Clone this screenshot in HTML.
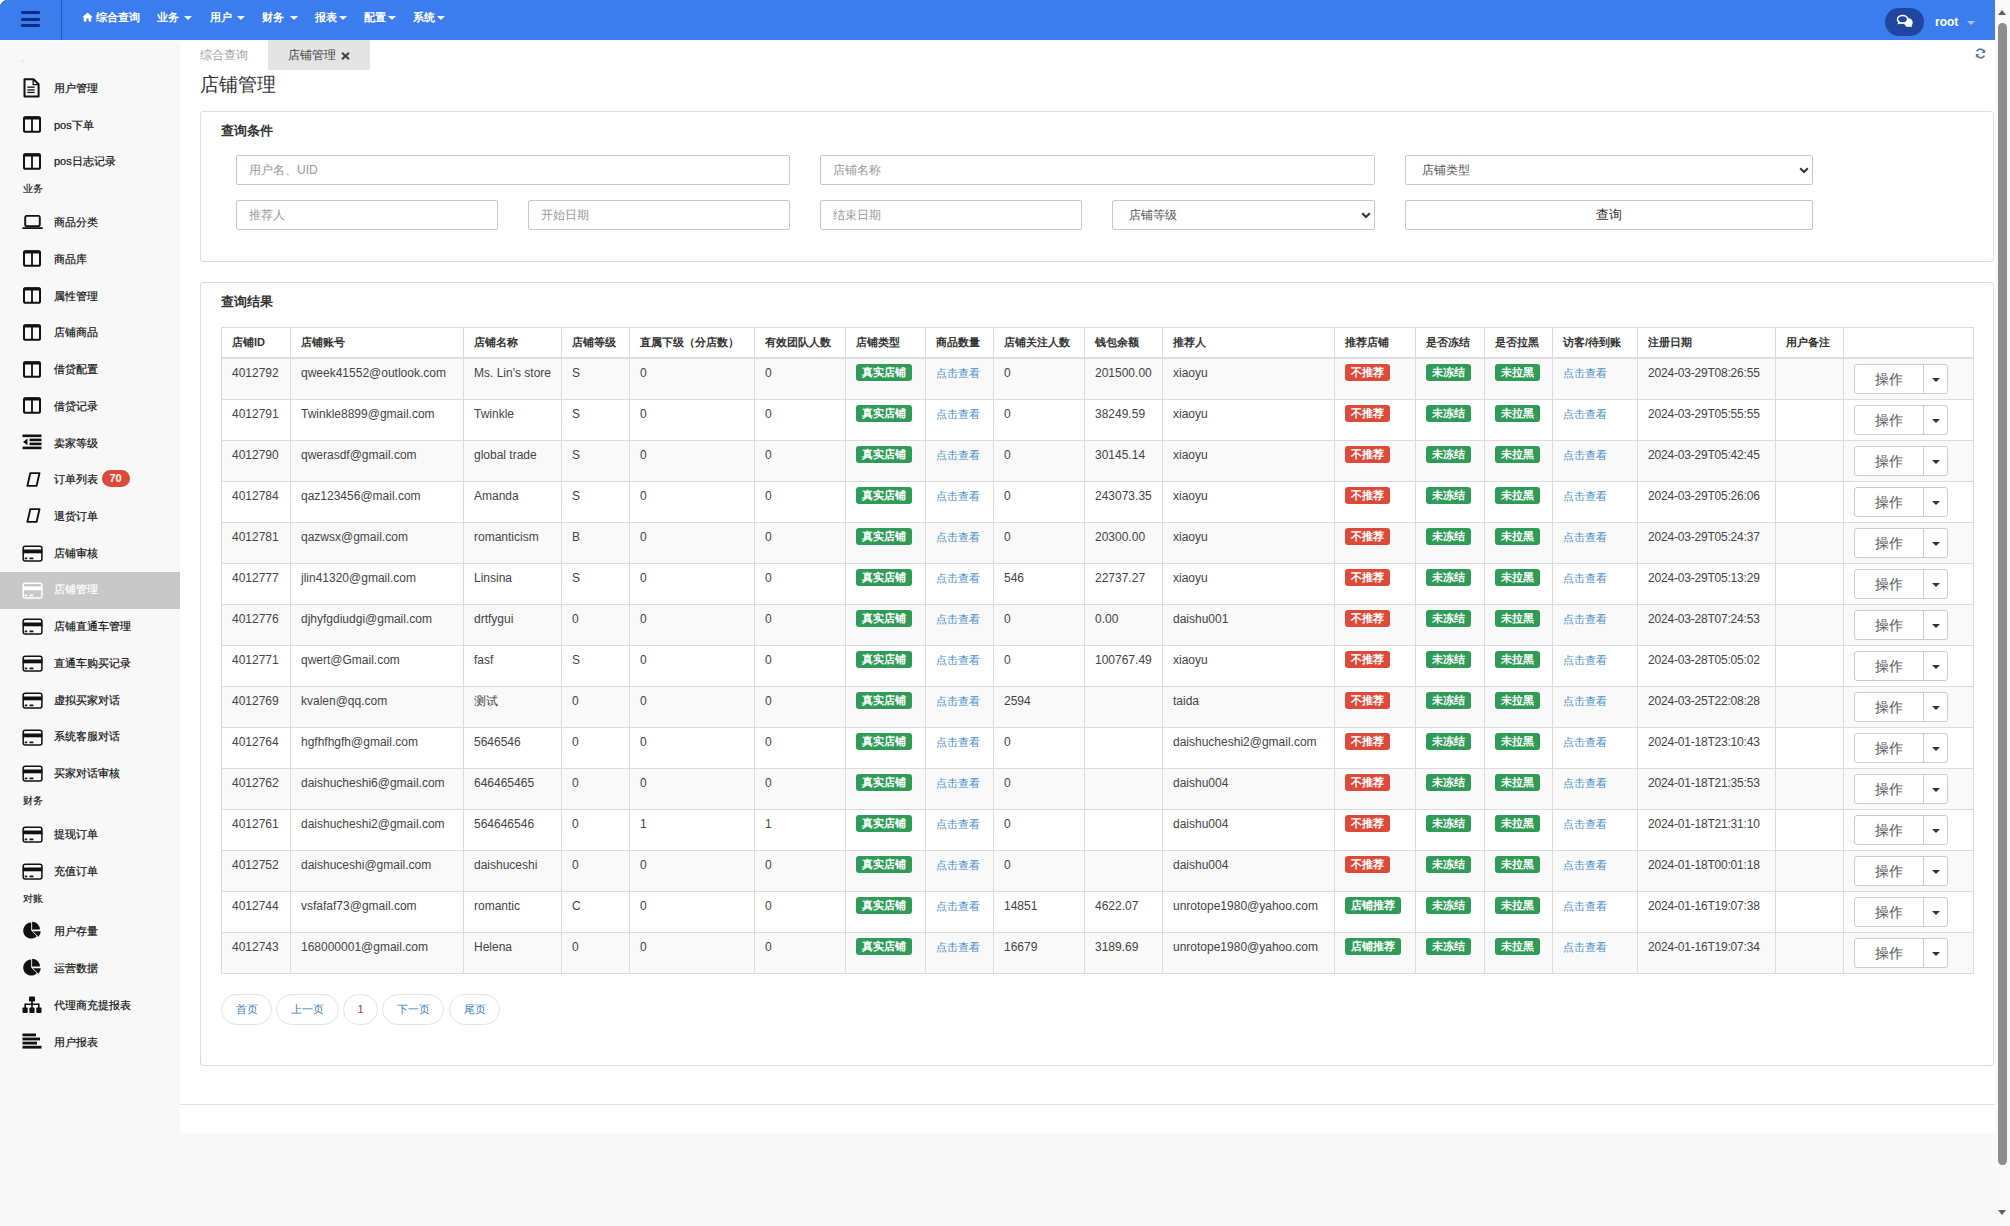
<!DOCTYPE html>
<html><head><meta charset="utf-8"><title>店铺管理</title>
<style>
*{box-sizing:border-box;}
html,body{margin:0;padding:0;}
body{width:2010px;height:1226px;overflow:hidden;position:relative;background:#f8f8f8;font-family:"Liberation Sans", sans-serif;font-size:12px;color:#333;}
.a{position:absolute;}
.ic{position:absolute;display:block;}
.nav{position:absolute;left:0;top:0;width:1995px;height:40px;background:#3b7ded;}
.nv{position:absolute;top:10px;color:#fff;font-weight:bold;font-size:11px;line-height:14px;white-space:nowrap;}
.car{position:absolute;width:0;height:0;border-left:4px solid transparent;border-right:4px solid transparent;border-top:4px solid #fff;}
.sb{position:absolute;left:54px;font-size:11px;line-height:16px;color:#111;-webkit-text-stroke:0.2px currentColor;white-space:nowrap;}
.sh{position:absolute;left:23px;font-size:10px;line-height:12px;color:#111;-webkit-text-stroke:0.15px #111;white-space:nowrap;}
.inp{position:absolute;height:30px;border:1px solid #c8c8c8;border-radius:2px;background:#fff;}
.ph{position:absolute;left:12px;top:7px;font-size:12px;line-height:14px;color:#999;white-space:nowrap;}
.cell{position:absolute;font-size:12px;line-height:17px;color:#444;white-space:nowrap;}
.hd{position:absolute;font-size:11px;line-height:17px;color:#333;font-weight:bold;white-space:nowrap;}
.vl{position:absolute;width:1px;background:#dcdcdc;}
.hl{position:absolute;height:1px;background:#dcdcdc;}
.bg{position:absolute;height:17px;border-radius:3px;color:#fff;font-weight:bold;font-size:11px;line-height:17px;text-align:center;white-space:nowrap;}
.g{background:#2f9b57;}
.r{background:#dc4a39;}
.lk{position:absolute;font-size:11px;line-height:17px;color:#4a90c8;white-space:nowrap;}
.btn{position:absolute;height:30px;border:1px solid #ccc;border-radius:3px;background:#fff;}
.pg{position:absolute;top:994px;height:31px;border:1px solid #e3e3e3;border-radius:16px;background:#fff;color:#3a86c4;font-size:11px;line-height:29px;text-align:center;white-space:nowrap;}
</style></head><body>

<div class="nav"></div>
<div class="a" style="left:60.5px;top:0;width:1.5px;height:40px;background:#2459c0"></div>
<div class="a" style="left:21px;top:11px;width:19px;height:3px;background:#0b2c85;border-radius:1px"></div>
<div class="a" style="left:21px;top:17.8px;width:19px;height:3px;background:#0b2c85;border-radius:1px"></div>
<div class="a" style="left:21px;top:24px;width:19px;height:3px;background:#0b2c85;border-radius:1px"></div>
<svg class="ic" style="left:82px;top:12px" width="11" height="10" viewBox="0 0 11 10"><path d="M5.5 0.5L10.8 5.2H9.2V9.6H6.6V6.6H4.4V9.6H1.8V5.2H0.2Z" fill="#fff"/></svg>
<div class="nv" style="left:96px">综合查询</div>
<div class="nv" style="left:157px">业务</div>
<div class="car" style="left:184px;top:16px"></div>
<div class="nv" style="left:210px">用户</div>
<div class="car" style="left:237px;top:16px"></div>
<div class="nv" style="left:262px">财务</div>
<div class="car" style="left:289.5px;top:16px"></div>
<div class="nv" style="left:315px">报表</div>
<div class="car" style="left:338.5px;top:16px"></div>
<div class="nv" style="left:364px">配置</div>
<div class="car" style="left:387.5px;top:16px"></div>
<div class="nv" style="left:413px">系统</div>
<div class="car" style="left:436.5px;top:16px"></div>
<div class="a" style="left:1885px;top:8px;width:39px;height:28px;border-radius:14px;background:#1f479f"></div>
<svg class="ic" style="left:1885px;top:8px" width="40" height="28" viewBox="0 0 40 28"><ellipse cx="23.4" cy="14.6" rx="4.3" ry="4.4" fill="#fff"/><path d="M23.5 17.5L26.8 19.2L26.2 15.5Z" fill="#fff"/><ellipse cx="17.6" cy="11.3" rx="5.1" ry="3.8" fill="#1f479f" stroke="#fff" stroke-width="1.7"/><path d="M13.6 13.6L12.3 16.6L16.6 15Z" fill="#fff"/></svg>
<div class="a" style="left:1935px;top:15px;color:#fff;font-weight:bold;font-size:12px;line-height:14px">root</div>
<div class="car" style="left:1967px;top:21px;border-top-color:#a8c4f2"></div>
<svg class="ic" style="left:0;top:0" width="8" height="8" viewBox="0 0 8 8"><path d="M0 0H6.5Q1.5 1.5 0 6.5Z" fill="#fff"/><path d="M6.5 0Q1.5 1.5 0 6.5" fill="none" stroke="#2a5fb8" stroke-width="1"/></svg>
<div class="a" style="left:0;top:40px;width:180px;height:2px;background:#fdfdfd"></div>
<div class="a" style="left:21px;top:57px;font-size:9px;line-height:9px;color:#dcdcdc">‹</div>
<div class="a" style="left:1995px;top:0;width:15px;height:1226px;background:#f9f9f9"></div>
<div class="a" style="left:1998px;top:23px;width:9px;height:1142px;border-radius:5px;background:#8d8d8d"></div>
<div class="a" style="left:1998px;top:10px;width:0;height:0;border-left:4.5px solid transparent;border-right:4.5px solid transparent;border-bottom:5px solid #606060"></div>
<div class="a" style="left:1998px;top:1210px;width:0;height:0;border-left:4.5px solid transparent;border-right:4.5px solid transparent;border-top:5px solid #606060"></div>
<div class="a" style="left:180px;top:40px;width:1815px;height:1093px;background:#fff"></div>
<div class="a" style="left:180px;top:1104px;width:1815px;height:1px;background:#e2e2e2"></div>
<div class="sb" style="top:80.00px;color:#111">用户管理</div>
<svg class="ic" style="left:23px;top:77.5px" width="17" height="20" viewBox="0 0 17 20"><path d="M1.5 1.2H10.5L15.6 6.3V18.5H1.5Z" fill="none" stroke="#111" stroke-width="2" stroke-linejoin="round"/><path d="M10.2 1.5V6.6H15.3" fill="none" stroke="#111" stroke-width="1.3"/><rect x="4.3" y="8.5" width="7.4" height="1.3" fill="#111"/><rect x="4.3" y="11.3" width="7.4" height="1.3" fill="#111"/><rect x="4.3" y="13.8" width="7.4" height="1.3" fill="#111"/></svg>
<div class="sb" style="top:116.73px;color:#111">pos下单</div>
<svg class="ic" style="left:23px;top:116.22999999999999px" width="18" height="17" viewBox="0 0 18 17"><rect x="1" y="1.2" width="16" height="14.6" rx="1.6" fill="none" stroke="#111" stroke-width="2"/><rect x="0.5" y="0.5" width="17" height="3" rx="1" fill="#111"/><rect x="8.1" y="1" width="1.8" height="15" fill="#111"/></svg>
<div class="sb" style="top:153.46px;color:#111">pos日志记录</div>
<svg class="ic" style="left:23px;top:152.95999999999998px" width="18" height="17" viewBox="0 0 18 17"><rect x="1" y="1.2" width="16" height="14.6" rx="1.6" fill="none" stroke="#111" stroke-width="2"/><rect x="0.5" y="0.5" width="17" height="3" rx="1" fill="#111"/><rect x="8.1" y="1" width="1.8" height="15" fill="#111"/></svg>
<div class="sh" style="top:183.46px">业务</div>
<div class="sb" style="top:214.19px;color:#111">商品分类</div>
<svg class="ic" style="left:21.7px;top:214.68999999999997px" width="21" height="15" viewBox="0 0 21 15"><rect x="3.2" y="0.9" width="14.6" height="10.3" rx="1.6" fill="none" stroke="#111" stroke-width="1.9"/><rect x="0.3" y="12.2" width="20.4" height="1.9" rx="0.6" fill="#111"/></svg>
<div class="sb" style="top:250.92px;color:#111">商品库</div>
<svg class="ic" style="left:23px;top:250.41999999999996px" width="18" height="17" viewBox="0 0 18 17"><rect x="1" y="1.2" width="16" height="14.6" rx="1.6" fill="none" stroke="#111" stroke-width="2"/><rect x="0.5" y="0.5" width="17" height="3" rx="1" fill="#111"/><rect x="8.1" y="1" width="1.8" height="15" fill="#111"/></svg>
<div class="sb" style="top:287.65px;color:#111">属性管理</div>
<svg class="ic" style="left:23px;top:287.15px" width="18" height="17" viewBox="0 0 18 17"><rect x="1" y="1.2" width="16" height="14.6" rx="1.6" fill="none" stroke="#111" stroke-width="2"/><rect x="0.5" y="0.5" width="17" height="3" rx="1" fill="#111"/><rect x="8.1" y="1" width="1.8" height="15" fill="#111"/></svg>
<div class="sb" style="top:324.38px;color:#111">店铺商品</div>
<svg class="ic" style="left:23px;top:323.88px" width="18" height="17" viewBox="0 0 18 17"><rect x="1" y="1.2" width="16" height="14.6" rx="1.6" fill="none" stroke="#111" stroke-width="2"/><rect x="0.5" y="0.5" width="17" height="3" rx="1" fill="#111"/><rect x="8.1" y="1" width="1.8" height="15" fill="#111"/></svg>
<div class="sb" style="top:361.11px;color:#111">借贷配置</div>
<svg class="ic" style="left:23px;top:360.61px" width="18" height="17" viewBox="0 0 18 17"><rect x="1" y="1.2" width="16" height="14.6" rx="1.6" fill="none" stroke="#111" stroke-width="2"/><rect x="0.5" y="0.5" width="17" height="3" rx="1" fill="#111"/><rect x="8.1" y="1" width="1.8" height="15" fill="#111"/></svg>
<div class="sb" style="top:397.84px;color:#111">借贷记录</div>
<svg class="ic" style="left:23px;top:397.34000000000003px" width="18" height="17" viewBox="0 0 18 17"><rect x="1" y="1.2" width="16" height="14.6" rx="1.6" fill="none" stroke="#111" stroke-width="2"/><rect x="0.5" y="0.5" width="17" height="3" rx="1" fill="#111"/><rect x="8.1" y="1" width="1.8" height="15" fill="#111"/></svg>
<div class="sb" style="top:434.57px;color:#111">卖家等级</div>
<svg class="ic" style="left:22px;top:433.57000000000005px" width="20" height="16" viewBox="0 0 20 16"><rect x="0.5" y="0.5" width="19" height="2.6" fill="#111"/><rect x="7.5" y="4.6" width="12" height="2.6" fill="#111"/><rect x="7.5" y="8.6" width="12" height="2.6" fill="#111"/><rect x="0.5" y="12.6" width="19" height="2.6" fill="#111"/><path d="M5.5 4.6V11.2L1 7.9Z" fill="#111"/></svg>
<div class="sb" style="top:471.30px;color:#111">订单列表</div>
<svg class="ic" style="left:26.3px;top:471.50000000000006px" width="15" height="15" viewBox="0 0 15 15"><path d="M4.3 1.1H13.5L10.6 13.9H1.4Z" fill="none" stroke="#111" stroke-width="1.9" stroke-linejoin="round"/></svg>
<div class="a" style="left:101.5px;top:470.30px;width:28px;height:17px;border-radius:9px;background:#dc4a39;color:#fff;font-weight:bold;font-size:11px;line-height:17px;text-align:center">70</div>
<div class="sb" style="top:508.03px;color:#111">退货订单</div>
<svg class="ic" style="left:26.3px;top:508.2300000000001px" width="15" height="15" viewBox="0 0 15 15"><path d="M4.3 1.1H13.5L10.6 13.9H1.4Z" fill="none" stroke="#111" stroke-width="1.9" stroke-linejoin="round"/></svg>
<div class="sb" style="top:544.76px;color:#111">店铺审核</div>
<svg class="ic" style="left:21.5px;top:544.8600000000001px" width="21" height="17" viewBox="0 0 21 17"><rect x="1.2" y="1.3" width="18.7" height="14.6" rx="2" fill="none" stroke="#111" stroke-width="1.5"/><rect x="0.8" y="4.5" width="19.5" height="3.8" fill="#111"/><rect x="2.7" y="12.5" width="2.5" height="1.8" rx="0.6" fill="#111"/><rect x="7.5" y="12.5" width="3.9" height="1.8" rx="0.6" fill="#111"/></svg>
<div class="a" style="left:0;top:571.89px;width:180px;height:37px;background:#c8c8c8"></div>
<div class="sb" style="top:581.49px;color:#fff">店铺管理</div>
<svg class="ic" style="left:21.5px;top:581.5900000000001px" width="21" height="17" viewBox="0 0 21 17"><rect x="1.2" y="1.3" width="18.7" height="14.6" rx="2" fill="none" stroke="#fff" stroke-width="1.5"/><rect x="0.8" y="4.5" width="19.5" height="3.8" fill="#fff"/><rect x="2.7" y="12.5" width="2.5" height="1.8" rx="0.6" fill="#fff"/><rect x="7.5" y="12.5" width="3.9" height="1.8" rx="0.6" fill="#fff"/></svg>
<div class="sb" style="top:618.22px;color:#111">店铺直通车管理</div>
<svg class="ic" style="left:21.5px;top:618.3200000000002px" width="21" height="17" viewBox="0 0 21 17"><rect x="1.2" y="1.3" width="18.7" height="14.6" rx="2" fill="none" stroke="#111" stroke-width="1.5"/><rect x="0.8" y="4.5" width="19.5" height="3.8" fill="#111"/><rect x="2.7" y="12.5" width="2.5" height="1.8" rx="0.6" fill="#111"/><rect x="7.5" y="12.5" width="3.9" height="1.8" rx="0.6" fill="#111"/></svg>
<div class="sb" style="top:654.95px;color:#111">直通车购买记录</div>
<svg class="ic" style="left:21.5px;top:655.0500000000002px" width="21" height="17" viewBox="0 0 21 17"><rect x="1.2" y="1.3" width="18.7" height="14.6" rx="2" fill="none" stroke="#111" stroke-width="1.5"/><rect x="0.8" y="4.5" width="19.5" height="3.8" fill="#111"/><rect x="2.7" y="12.5" width="2.5" height="1.8" rx="0.6" fill="#111"/><rect x="7.5" y="12.5" width="3.9" height="1.8" rx="0.6" fill="#111"/></svg>
<div class="sb" style="top:691.68px;color:#111">虚拟买家对话</div>
<svg class="ic" style="left:21.5px;top:691.7800000000002px" width="21" height="17" viewBox="0 0 21 17"><rect x="1.2" y="1.3" width="18.7" height="14.6" rx="2" fill="none" stroke="#111" stroke-width="1.5"/><rect x="0.8" y="4.5" width="19.5" height="3.8" fill="#111"/><rect x="2.7" y="12.5" width="2.5" height="1.8" rx="0.6" fill="#111"/><rect x="7.5" y="12.5" width="3.9" height="1.8" rx="0.6" fill="#111"/></svg>
<div class="sb" style="top:728.41px;color:#111">系统客服对话</div>
<svg class="ic" style="left:21.5px;top:728.5100000000002px" width="21" height="17" viewBox="0 0 21 17"><rect x="1.2" y="1.3" width="18.7" height="14.6" rx="2" fill="none" stroke="#111" stroke-width="1.5"/><rect x="0.8" y="4.5" width="19.5" height="3.8" fill="#111"/><rect x="2.7" y="12.5" width="2.5" height="1.8" rx="0.6" fill="#111"/><rect x="7.5" y="12.5" width="3.9" height="1.8" rx="0.6" fill="#111"/></svg>
<div class="sb" style="top:765.14px;color:#111">买家对话审核</div>
<svg class="ic" style="left:21.5px;top:765.2400000000002px" width="21" height="17" viewBox="0 0 21 17"><rect x="1.2" y="1.3" width="18.7" height="14.6" rx="2" fill="none" stroke="#111" stroke-width="1.5"/><rect x="0.8" y="4.5" width="19.5" height="3.8" fill="#111"/><rect x="2.7" y="12.5" width="2.5" height="1.8" rx="0.6" fill="#111"/><rect x="7.5" y="12.5" width="3.9" height="1.8" rx="0.6" fill="#111"/></svg>
<div class="sh" style="top:795.14px">财务</div>
<div class="sb" style="top:825.87px;color:#111">提现订单</div>
<svg class="ic" style="left:21.5px;top:825.9700000000003px" width="21" height="17" viewBox="0 0 21 17"><rect x="1.2" y="1.3" width="18.7" height="14.6" rx="2" fill="none" stroke="#111" stroke-width="1.5"/><rect x="0.8" y="4.5" width="19.5" height="3.8" fill="#111"/><rect x="2.7" y="12.5" width="2.5" height="1.8" rx="0.6" fill="#111"/><rect x="7.5" y="12.5" width="3.9" height="1.8" rx="0.6" fill="#111"/></svg>
<div class="sb" style="top:862.60px;color:#111">充值订单</div>
<svg class="ic" style="left:21.5px;top:862.7000000000003px" width="21" height="17" viewBox="0 0 21 17"><rect x="1.2" y="1.3" width="18.7" height="14.6" rx="2" fill="none" stroke="#111" stroke-width="1.5"/><rect x="0.8" y="4.5" width="19.5" height="3.8" fill="#111"/><rect x="2.7" y="12.5" width="2.5" height="1.8" rx="0.6" fill="#111"/><rect x="7.5" y="12.5" width="3.9" height="1.8" rx="0.6" fill="#111"/></svg>
<div class="sh" style="top:892.60px">对账</div>
<div class="sb" style="top:923.33px;color:#111">用户存量</div>
<svg class="ic" style="left:18px;top:918.0000000000002px" width="28" height="26" viewBox="0 0 28 26"><path d="M13.2 12.6V4.6A8 8 0 1 0 18.86 18.26Z" fill="#111"/><path d="M14.1 11.6V3.8A7.8 7.8 0 0 1 21.9 11.6Z" fill="#111"/><path d="M14.9 13.3H22.7A7.8 7.8 0 0 1 20.4 18.8Z" fill="#111"/></svg>
<div class="sb" style="top:960.06px;color:#111">运营数据</div>
<svg class="ic" style="left:18px;top:954.7300000000002px" width="28" height="26" viewBox="0 0 28 26"><path d="M13.2 12.6V4.6A8 8 0 1 0 18.86 18.26Z" fill="#111"/><path d="M14.1 11.6V3.8A7.8 7.8 0 0 1 21.9 11.6Z" fill="#111"/><path d="M14.9 13.3H22.7A7.8 7.8 0 0 1 20.4 18.8Z" fill="#111"/></svg>
<div class="sb" style="top:996.79px;color:#111">代理商充提报表</div>
<svg class="ic" style="left:22px;top:995.7900000000003px" width="20" height="18" viewBox="0 0 20 18"><rect x="7" y="0.5" width="6" height="5" rx="0.8" fill="#111"/><rect x="9.2" y="5" width="1.6" height="3.4" fill="#111"/><path d="M3.2 12V8.2H16.8V12" fill="none" stroke="#111" stroke-width="1.6"/><rect x="9.2" y="8" width="1.6" height="4" fill="#111"/><rect x="0.5" y="11.5" width="5.2" height="5.5" rx="0.8" fill="#111"/><rect x="7.4" y="11.5" width="5.2" height="5.5" rx="0.8" fill="#111"/><rect x="14.3" y="11.5" width="5.2" height="5.5" rx="0.8" fill="#111"/></svg>
<div class="sb" style="top:1033.52px;color:#111">用户报表</div>
<svg class="ic" style="left:22px;top:1033.0200000000002px" width="20" height="17" viewBox="0 0 20 17"><rect x="0.5" y="0.5" width="13.5" height="2.8" fill="#111"/><rect x="0.5" y="4.6" width="17.5" height="2.8" fill="#111"/><rect x="0.5" y="8.7" width="14.5" height="2.8" fill="#111"/><rect x="0.5" y="12.8" width="19" height="2.8" fill="#111"/></svg>
<div class="a" style="left:200px;top:48px;font-size:12px;line-height:14px;color:#9c9c9c">综合查询</div>
<div class="a" style="left:268px;top:40px;width:102px;height:30px;background:#e4e4e4"></div>
<div class="a" style="left:288px;top:48px;font-size:12px;line-height:14px;color:#444">店铺管理</div>
<svg class="ic" style="left:341px;top:52px" width="9" height="8" viewBox="0 0 9 8"><path d="M1 0.8L8 7.2M8 0.8L1 7.2" stroke="#444" stroke-width="2.2"/></svg>
<svg class="ic" style="left:1975px;top:48px" width="11" height="11" viewBox="0 0 11 11"><path d="M9.3 4.2A4.2 4.2 0 0 0 1.6 3.4M1.7 6.8A4.2 4.2 0 0 0 9.4 7.6" fill="none" stroke="#557a9e" stroke-width="1.7"/><path d="M10.2 1.2V5H6.6Z" fill="#557a9e"/><path d="M0.8 9.8V6H4.4Z" fill="#557a9e"/></svg>
<div class="a" style="left:200px;top:73px;font-size:19px;line-height:24px;color:#333">店铺管理</div>
<div class="a" style="left:200px;top:111px;width:1794px;height:151px;border:1px solid #dedede;border-radius:3px;background:#fff"></div>
<div class="a" style="left:221px;top:123px;font-size:13px;line-height:16px;font-weight:bold;color:#333">查询条件</div>
<div class="inp" style="left:236px;top:155px;width:554px"><div class="ph" style="color:#999;">用户名、UID</div></div>
<div class="inp" style="left:820px;top:155px;width:555px"><div class="ph" style="color:#999;">店铺名称</div></div>
<div class="inp" style="left:1405px;top:155px;width:408px"><div class="ph" style="color:#555;left:16px">店铺类型</div><svg class="ic" style="left:393px;top:11px" width="10" height="7" viewBox="0 0 10 7"><path d="M1.2 1.2L5 5L8.8 1.2" fill="none" stroke="#333" stroke-width="2"/></svg></div>
<div class="inp" style="left:236px;top:200px;width:262px"><div class="ph" style="color:#999;">推荐人</div></div>
<div class="inp" style="left:528px;top:200px;width:262px"><div class="ph" style="color:#999;">开始日期</div></div>
<div class="inp" style="left:820px;top:200px;width:262px"><div class="ph" style="color:#999;">结束日期</div></div>
<div class="inp" style="left:1112px;top:200px;width:263px"><div class="ph" style="color:#555;left:16px">店铺等级</div><svg class="ic" style="left:248px;top:11px" width="10" height="7" viewBox="0 0 10 7"><path d="M1.2 1.2L5 5L8.8 1.2" fill="none" stroke="#333" stroke-width="2"/></svg></div>
<div class="inp" style="left:1405px;top:200px;width:408px;border-color:#c8c8c8"><div class="ph" style="left:0;width:406px;text-align:center;color:#333;font-size:13px">查询</div></div>
<div class="a" style="left:200px;top:282px;width:1794px;height:784px;border:1px solid #dedede;border-radius:3px;background:#fff"></div>
<div class="a" style="left:221px;top:294px;font-size:13px;line-height:16px;font-weight:bold;color:#333">查询结果</div>
<div class="a" style="left:221px;top:358px;width:1752px;height:41px;background:#f9f9f9"></div>
<div class="a" style="left:221px;top:440px;width:1752px;height:41px;background:#f9f9f9"></div>
<div class="a" style="left:221px;top:522px;width:1752px;height:41px;background:#f9f9f9"></div>
<div class="a" style="left:221px;top:604px;width:1752px;height:41px;background:#f9f9f9"></div>
<div class="a" style="left:221px;top:686px;width:1752px;height:41px;background:#f9f9f9"></div>
<div class="a" style="left:221px;top:768px;width:1752px;height:41px;background:#f9f9f9"></div>
<div class="a" style="left:221px;top:850px;width:1752px;height:41px;background:#f9f9f9"></div>
<div class="a" style="left:221px;top:932px;width:1752px;height:41px;background:#f9f9f9"></div>
<div class="vl" style="left:221px;top:327px;height:647px"></div>
<div class="vl" style="left:290px;top:327px;height:647px"></div>
<div class="vl" style="left:463px;top:327px;height:647px"></div>
<div class="vl" style="left:561px;top:327px;height:647px"></div>
<div class="vl" style="left:629px;top:327px;height:647px"></div>
<div class="vl" style="left:754px;top:327px;height:647px"></div>
<div class="vl" style="left:845px;top:327px;height:647px"></div>
<div class="vl" style="left:925px;top:327px;height:647px"></div>
<div class="vl" style="left:993px;top:327px;height:647px"></div>
<div class="vl" style="left:1084px;top:327px;height:647px"></div>
<div class="vl" style="left:1162px;top:327px;height:647px"></div>
<div class="vl" style="left:1334px;top:327px;height:647px"></div>
<div class="vl" style="left:1415px;top:327px;height:647px"></div>
<div class="vl" style="left:1484px;top:327px;height:647px"></div>
<div class="vl" style="left:1552px;top:327px;height:647px"></div>
<div class="vl" style="left:1637px;top:327px;height:647px"></div>
<div class="vl" style="left:1775px;top:327px;height:647px"></div>
<div class="vl" style="left:1843px;top:327px;height:647px"></div>
<div class="vl" style="left:1973px;top:327px;height:647px"></div>
<div class="hl" style="left:221px;top:327px;width:1753px"></div>
<div class="a" style="left:221px;top:357px;width:1753px;height:2px;background:#dcdcdc"></div>
<div class="hl" style="left:221px;top:399px;width:1753px"></div>
<div class="hl" style="left:221px;top:440px;width:1753px"></div>
<div class="hl" style="left:221px;top:481px;width:1753px"></div>
<div class="hl" style="left:221px;top:522px;width:1753px"></div>
<div class="hl" style="left:221px;top:563px;width:1753px"></div>
<div class="hl" style="left:221px;top:604px;width:1753px"></div>
<div class="hl" style="left:221px;top:645px;width:1753px"></div>
<div class="hl" style="left:221px;top:686px;width:1753px"></div>
<div class="hl" style="left:221px;top:727px;width:1753px"></div>
<div class="hl" style="left:221px;top:768px;width:1753px"></div>
<div class="hl" style="left:221px;top:809px;width:1753px"></div>
<div class="hl" style="left:221px;top:850px;width:1753px"></div>
<div class="hl" style="left:221px;top:891px;width:1753px"></div>
<div class="hl" style="left:221px;top:932px;width:1753px"></div>
<div class="hl" style="left:221px;top:973px;width:1753px"></div>
<div class="hd" style="left:232px;top:334px">店铺ID</div>
<div class="hd" style="left:301px;top:334px">店铺账号</div>
<div class="hd" style="left:474px;top:334px">店铺名称</div>
<div class="hd" style="left:572px;top:334px">店铺等级</div>
<div class="hd" style="left:640px;top:334px">直属下级（分店数）</div>
<div class="hd" style="left:765px;top:334px">有效团队人数</div>
<div class="hd" style="left:856px;top:334px">店铺类型</div>
<div class="hd" style="left:936px;top:334px">商品数量</div>
<div class="hd" style="left:1004px;top:334px">店铺关注人数</div>
<div class="hd" style="left:1095px;top:334px">钱包余额</div>
<div class="hd" style="left:1173px;top:334px">推荐人</div>
<div class="hd" style="left:1345px;top:334px">推荐店铺</div>
<div class="hd" style="left:1426px;top:334px">是否冻结</div>
<div class="hd" style="left:1495px;top:334px">是否拉黑</div>
<div class="hd" style="left:1563px;top:334px">访客/待到账</div>
<div class="hd" style="left:1648px;top:334px">注册日期</div>
<div class="hd" style="left:1786px;top:334px">用户备注</div>
<div class="cell" style="left:232px;top:365px">4012792</div>
<div class="cell" style="left:301px;top:365px">qweek41552@outlook.com</div>
<div class="cell" style="left:474px;top:365px">Ms. Lin's store</div>
<div class="cell" style="left:572px;top:365px">S</div>
<div class="cell" style="left:640px;top:365px">0</div>
<div class="cell" style="left:765px;top:365px">0</div>
<div class="cell" style="left:1004px;top:365px">0</div>
<div class="cell" style="left:1095px;top:365px">201500.00</div>
<div class="cell" style="left:1173px;top:365px">xiaoyu</div>
<div class="cell" style="left:1648px;top:365px;letter-spacing:-0.2px">2024-03-29T08:26:55</div>
<div class="bg g" style="left:856px;top:364px;width:56px">真实店铺</div>
<div class="lk" style="left:936px;top:365px">点击查看</div>
<div class="bg r" style="left:1345px;top:364px;width:45px">不推荐</div>
<div class="bg g" style="left:1426px;top:364px;width:45px">未冻结</div>
<div class="bg g" style="left:1495px;top:364px;width:45px">未拉黑</div>
<div class="lk" style="left:1563px;top:365px">点击查看</div>
<div class="btn" style="left:1854px;top:364px;width:94px"></div>
<div class="a" style="left:1923px;top:364px;width:1px;height:30px;background:#ccc"></div>
<div class="a" style="left:1854px;top:371px;width:70px;text-align:center;font-size:14px;line-height:17px;color:#555">操作</div>
<div class="car" style="left:1932px;top:378px;border-top-color:#333"></div>
<div class="cell" style="left:232px;top:406px">4012791</div>
<div class="cell" style="left:301px;top:406px">Twinkle8899@gmail.com</div>
<div class="cell" style="left:474px;top:406px">Twinkle</div>
<div class="cell" style="left:572px;top:406px">S</div>
<div class="cell" style="left:640px;top:406px">0</div>
<div class="cell" style="left:765px;top:406px">0</div>
<div class="cell" style="left:1004px;top:406px">0</div>
<div class="cell" style="left:1095px;top:406px">38249.59</div>
<div class="cell" style="left:1173px;top:406px">xiaoyu</div>
<div class="cell" style="left:1648px;top:406px;letter-spacing:-0.2px">2024-03-29T05:55:55</div>
<div class="bg g" style="left:856px;top:405px;width:56px">真实店铺</div>
<div class="lk" style="left:936px;top:406px">点击查看</div>
<div class="bg r" style="left:1345px;top:405px;width:45px">不推荐</div>
<div class="bg g" style="left:1426px;top:405px;width:45px">未冻结</div>
<div class="bg g" style="left:1495px;top:405px;width:45px">未拉黑</div>
<div class="lk" style="left:1563px;top:406px">点击查看</div>
<div class="btn" style="left:1854px;top:405px;width:94px"></div>
<div class="a" style="left:1923px;top:405px;width:1px;height:30px;background:#ccc"></div>
<div class="a" style="left:1854px;top:412px;width:70px;text-align:center;font-size:14px;line-height:17px;color:#555">操作</div>
<div class="car" style="left:1932px;top:419px;border-top-color:#333"></div>
<div class="cell" style="left:232px;top:447px">4012790</div>
<div class="cell" style="left:301px;top:447px">qwerasdf@gmail.com</div>
<div class="cell" style="left:474px;top:447px">global trade</div>
<div class="cell" style="left:572px;top:447px">S</div>
<div class="cell" style="left:640px;top:447px">0</div>
<div class="cell" style="left:765px;top:447px">0</div>
<div class="cell" style="left:1004px;top:447px">0</div>
<div class="cell" style="left:1095px;top:447px">30145.14</div>
<div class="cell" style="left:1173px;top:447px">xiaoyu</div>
<div class="cell" style="left:1648px;top:447px;letter-spacing:-0.2px">2024-03-29T05:42:45</div>
<div class="bg g" style="left:856px;top:446px;width:56px">真实店铺</div>
<div class="lk" style="left:936px;top:447px">点击查看</div>
<div class="bg r" style="left:1345px;top:446px;width:45px">不推荐</div>
<div class="bg g" style="left:1426px;top:446px;width:45px">未冻结</div>
<div class="bg g" style="left:1495px;top:446px;width:45px">未拉黑</div>
<div class="lk" style="left:1563px;top:447px">点击查看</div>
<div class="btn" style="left:1854px;top:446px;width:94px"></div>
<div class="a" style="left:1923px;top:446px;width:1px;height:30px;background:#ccc"></div>
<div class="a" style="left:1854px;top:453px;width:70px;text-align:center;font-size:14px;line-height:17px;color:#555">操作</div>
<div class="car" style="left:1932px;top:460px;border-top-color:#333"></div>
<div class="cell" style="left:232px;top:488px">4012784</div>
<div class="cell" style="left:301px;top:488px">qaz123456@mail.com</div>
<div class="cell" style="left:474px;top:488px">Amanda</div>
<div class="cell" style="left:572px;top:488px">S</div>
<div class="cell" style="left:640px;top:488px">0</div>
<div class="cell" style="left:765px;top:488px">0</div>
<div class="cell" style="left:1004px;top:488px">0</div>
<div class="cell" style="left:1095px;top:488px">243073.35</div>
<div class="cell" style="left:1173px;top:488px">xiaoyu</div>
<div class="cell" style="left:1648px;top:488px;letter-spacing:-0.2px">2024-03-29T05:26:06</div>
<div class="bg g" style="left:856px;top:487px;width:56px">真实店铺</div>
<div class="lk" style="left:936px;top:488px">点击查看</div>
<div class="bg r" style="left:1345px;top:487px;width:45px">不推荐</div>
<div class="bg g" style="left:1426px;top:487px;width:45px">未冻结</div>
<div class="bg g" style="left:1495px;top:487px;width:45px">未拉黑</div>
<div class="lk" style="left:1563px;top:488px">点击查看</div>
<div class="btn" style="left:1854px;top:487px;width:94px"></div>
<div class="a" style="left:1923px;top:487px;width:1px;height:30px;background:#ccc"></div>
<div class="a" style="left:1854px;top:494px;width:70px;text-align:center;font-size:14px;line-height:17px;color:#555">操作</div>
<div class="car" style="left:1932px;top:501px;border-top-color:#333"></div>
<div class="cell" style="left:232px;top:529px">4012781</div>
<div class="cell" style="left:301px;top:529px">qazwsx@gmail.com</div>
<div class="cell" style="left:474px;top:529px">romanticism</div>
<div class="cell" style="left:572px;top:529px">B</div>
<div class="cell" style="left:640px;top:529px">0</div>
<div class="cell" style="left:765px;top:529px">0</div>
<div class="cell" style="left:1004px;top:529px">0</div>
<div class="cell" style="left:1095px;top:529px">20300.00</div>
<div class="cell" style="left:1173px;top:529px">xiaoyu</div>
<div class="cell" style="left:1648px;top:529px;letter-spacing:-0.2px">2024-03-29T05:24:37</div>
<div class="bg g" style="left:856px;top:528px;width:56px">真实店铺</div>
<div class="lk" style="left:936px;top:529px">点击查看</div>
<div class="bg r" style="left:1345px;top:528px;width:45px">不推荐</div>
<div class="bg g" style="left:1426px;top:528px;width:45px">未冻结</div>
<div class="bg g" style="left:1495px;top:528px;width:45px">未拉黑</div>
<div class="lk" style="left:1563px;top:529px">点击查看</div>
<div class="btn" style="left:1854px;top:528px;width:94px"></div>
<div class="a" style="left:1923px;top:528px;width:1px;height:30px;background:#ccc"></div>
<div class="a" style="left:1854px;top:535px;width:70px;text-align:center;font-size:14px;line-height:17px;color:#555">操作</div>
<div class="car" style="left:1932px;top:542px;border-top-color:#333"></div>
<div class="cell" style="left:232px;top:570px">4012777</div>
<div class="cell" style="left:301px;top:570px">jlin41320@gmail.com</div>
<div class="cell" style="left:474px;top:570px">Linsina</div>
<div class="cell" style="left:572px;top:570px">S</div>
<div class="cell" style="left:640px;top:570px">0</div>
<div class="cell" style="left:765px;top:570px">0</div>
<div class="cell" style="left:1004px;top:570px">546</div>
<div class="cell" style="left:1095px;top:570px">22737.27</div>
<div class="cell" style="left:1173px;top:570px">xiaoyu</div>
<div class="cell" style="left:1648px;top:570px;letter-spacing:-0.2px">2024-03-29T05:13:29</div>
<div class="bg g" style="left:856px;top:569px;width:56px">真实店铺</div>
<div class="lk" style="left:936px;top:570px">点击查看</div>
<div class="bg r" style="left:1345px;top:569px;width:45px">不推荐</div>
<div class="bg g" style="left:1426px;top:569px;width:45px">未冻结</div>
<div class="bg g" style="left:1495px;top:569px;width:45px">未拉黑</div>
<div class="lk" style="left:1563px;top:570px">点击查看</div>
<div class="btn" style="left:1854px;top:569px;width:94px"></div>
<div class="a" style="left:1923px;top:569px;width:1px;height:30px;background:#ccc"></div>
<div class="a" style="left:1854px;top:576px;width:70px;text-align:center;font-size:14px;line-height:17px;color:#555">操作</div>
<div class="car" style="left:1932px;top:583px;border-top-color:#333"></div>
<div class="cell" style="left:232px;top:611px">4012776</div>
<div class="cell" style="left:301px;top:611px">djhyfgdiudgi@gmail.com</div>
<div class="cell" style="left:474px;top:611px">drtfygui</div>
<div class="cell" style="left:572px;top:611px">0</div>
<div class="cell" style="left:640px;top:611px">0</div>
<div class="cell" style="left:765px;top:611px">0</div>
<div class="cell" style="left:1004px;top:611px">0</div>
<div class="cell" style="left:1095px;top:611px">0.00</div>
<div class="cell" style="left:1173px;top:611px">daishu001</div>
<div class="cell" style="left:1648px;top:611px;letter-spacing:-0.2px">2024-03-28T07:24:53</div>
<div class="bg g" style="left:856px;top:610px;width:56px">真实店铺</div>
<div class="lk" style="left:936px;top:611px">点击查看</div>
<div class="bg r" style="left:1345px;top:610px;width:45px">不推荐</div>
<div class="bg g" style="left:1426px;top:610px;width:45px">未冻结</div>
<div class="bg g" style="left:1495px;top:610px;width:45px">未拉黑</div>
<div class="lk" style="left:1563px;top:611px">点击查看</div>
<div class="btn" style="left:1854px;top:610px;width:94px"></div>
<div class="a" style="left:1923px;top:610px;width:1px;height:30px;background:#ccc"></div>
<div class="a" style="left:1854px;top:617px;width:70px;text-align:center;font-size:14px;line-height:17px;color:#555">操作</div>
<div class="car" style="left:1932px;top:624px;border-top-color:#333"></div>
<div class="cell" style="left:232px;top:652px">4012771</div>
<div class="cell" style="left:301px;top:652px">qwert@Gmail.com</div>
<div class="cell" style="left:474px;top:652px">fasf</div>
<div class="cell" style="left:572px;top:652px">S</div>
<div class="cell" style="left:640px;top:652px">0</div>
<div class="cell" style="left:765px;top:652px">0</div>
<div class="cell" style="left:1004px;top:652px">0</div>
<div class="cell" style="left:1095px;top:652px">100767.49</div>
<div class="cell" style="left:1173px;top:652px">xiaoyu</div>
<div class="cell" style="left:1648px;top:652px;letter-spacing:-0.2px">2024-03-28T05:05:02</div>
<div class="bg g" style="left:856px;top:651px;width:56px">真实店铺</div>
<div class="lk" style="left:936px;top:652px">点击查看</div>
<div class="bg r" style="left:1345px;top:651px;width:45px">不推荐</div>
<div class="bg g" style="left:1426px;top:651px;width:45px">未冻结</div>
<div class="bg g" style="left:1495px;top:651px;width:45px">未拉黑</div>
<div class="lk" style="left:1563px;top:652px">点击查看</div>
<div class="btn" style="left:1854px;top:651px;width:94px"></div>
<div class="a" style="left:1923px;top:651px;width:1px;height:30px;background:#ccc"></div>
<div class="a" style="left:1854px;top:658px;width:70px;text-align:center;font-size:14px;line-height:17px;color:#555">操作</div>
<div class="car" style="left:1932px;top:665px;border-top-color:#333"></div>
<div class="cell" style="left:232px;top:693px">4012769</div>
<div class="cell" style="left:301px;top:693px">kvalen@qq.com</div>
<div class="cell" style="left:474px;top:693px">测试</div>
<div class="cell" style="left:572px;top:693px">0</div>
<div class="cell" style="left:640px;top:693px">0</div>
<div class="cell" style="left:765px;top:693px">0</div>
<div class="cell" style="left:1004px;top:693px">2594</div>
<div class="cell" style="left:1173px;top:693px">taida</div>
<div class="cell" style="left:1648px;top:693px;letter-spacing:-0.2px">2024-03-25T22:08:28</div>
<div class="bg g" style="left:856px;top:692px;width:56px">真实店铺</div>
<div class="lk" style="left:936px;top:693px">点击查看</div>
<div class="bg r" style="left:1345px;top:692px;width:45px">不推荐</div>
<div class="bg g" style="left:1426px;top:692px;width:45px">未冻结</div>
<div class="bg g" style="left:1495px;top:692px;width:45px">未拉黑</div>
<div class="lk" style="left:1563px;top:693px">点击查看</div>
<div class="btn" style="left:1854px;top:692px;width:94px"></div>
<div class="a" style="left:1923px;top:692px;width:1px;height:30px;background:#ccc"></div>
<div class="a" style="left:1854px;top:699px;width:70px;text-align:center;font-size:14px;line-height:17px;color:#555">操作</div>
<div class="car" style="left:1932px;top:706px;border-top-color:#333"></div>
<div class="cell" style="left:232px;top:734px">4012764</div>
<div class="cell" style="left:301px;top:734px">hgfhfhgfh@gmail.com</div>
<div class="cell" style="left:474px;top:734px">5646546</div>
<div class="cell" style="left:572px;top:734px">0</div>
<div class="cell" style="left:640px;top:734px">0</div>
<div class="cell" style="left:765px;top:734px">0</div>
<div class="cell" style="left:1004px;top:734px">0</div>
<div class="cell" style="left:1173px;top:734px">daishucheshi2@gmail.com</div>
<div class="cell" style="left:1648px;top:734px;letter-spacing:-0.2px">2024-01-18T23:10:43</div>
<div class="bg g" style="left:856px;top:733px;width:56px">真实店铺</div>
<div class="lk" style="left:936px;top:734px">点击查看</div>
<div class="bg r" style="left:1345px;top:733px;width:45px">不推荐</div>
<div class="bg g" style="left:1426px;top:733px;width:45px">未冻结</div>
<div class="bg g" style="left:1495px;top:733px;width:45px">未拉黑</div>
<div class="lk" style="left:1563px;top:734px">点击查看</div>
<div class="btn" style="left:1854px;top:733px;width:94px"></div>
<div class="a" style="left:1923px;top:733px;width:1px;height:30px;background:#ccc"></div>
<div class="a" style="left:1854px;top:740px;width:70px;text-align:center;font-size:14px;line-height:17px;color:#555">操作</div>
<div class="car" style="left:1932px;top:747px;border-top-color:#333"></div>
<div class="cell" style="left:232px;top:775px">4012762</div>
<div class="cell" style="left:301px;top:775px">daishucheshi6@gmail.com</div>
<div class="cell" style="left:474px;top:775px">646465465</div>
<div class="cell" style="left:572px;top:775px">0</div>
<div class="cell" style="left:640px;top:775px">0</div>
<div class="cell" style="left:765px;top:775px">0</div>
<div class="cell" style="left:1004px;top:775px">0</div>
<div class="cell" style="left:1173px;top:775px">daishu004</div>
<div class="cell" style="left:1648px;top:775px;letter-spacing:-0.2px">2024-01-18T21:35:53</div>
<div class="bg g" style="left:856px;top:774px;width:56px">真实店铺</div>
<div class="lk" style="left:936px;top:775px">点击查看</div>
<div class="bg r" style="left:1345px;top:774px;width:45px">不推荐</div>
<div class="bg g" style="left:1426px;top:774px;width:45px">未冻结</div>
<div class="bg g" style="left:1495px;top:774px;width:45px">未拉黑</div>
<div class="lk" style="left:1563px;top:775px">点击查看</div>
<div class="btn" style="left:1854px;top:774px;width:94px"></div>
<div class="a" style="left:1923px;top:774px;width:1px;height:30px;background:#ccc"></div>
<div class="a" style="left:1854px;top:781px;width:70px;text-align:center;font-size:14px;line-height:17px;color:#555">操作</div>
<div class="car" style="left:1932px;top:788px;border-top-color:#333"></div>
<div class="cell" style="left:232px;top:816px">4012761</div>
<div class="cell" style="left:301px;top:816px">daishucheshi2@gmail.com</div>
<div class="cell" style="left:474px;top:816px">564646546</div>
<div class="cell" style="left:572px;top:816px">0</div>
<div class="cell" style="left:640px;top:816px">1</div>
<div class="cell" style="left:765px;top:816px">1</div>
<div class="cell" style="left:1004px;top:816px">0</div>
<div class="cell" style="left:1173px;top:816px">daishu004</div>
<div class="cell" style="left:1648px;top:816px;letter-spacing:-0.2px">2024-01-18T21:31:10</div>
<div class="bg g" style="left:856px;top:815px;width:56px">真实店铺</div>
<div class="lk" style="left:936px;top:816px">点击查看</div>
<div class="bg r" style="left:1345px;top:815px;width:45px">不推荐</div>
<div class="bg g" style="left:1426px;top:815px;width:45px">未冻结</div>
<div class="bg g" style="left:1495px;top:815px;width:45px">未拉黑</div>
<div class="lk" style="left:1563px;top:816px">点击查看</div>
<div class="btn" style="left:1854px;top:815px;width:94px"></div>
<div class="a" style="left:1923px;top:815px;width:1px;height:30px;background:#ccc"></div>
<div class="a" style="left:1854px;top:822px;width:70px;text-align:center;font-size:14px;line-height:17px;color:#555">操作</div>
<div class="car" style="left:1932px;top:829px;border-top-color:#333"></div>
<div class="cell" style="left:232px;top:857px">4012752</div>
<div class="cell" style="left:301px;top:857px">daishuceshi@gmail.com</div>
<div class="cell" style="left:474px;top:857px">daishuceshi</div>
<div class="cell" style="left:572px;top:857px">0</div>
<div class="cell" style="left:640px;top:857px">0</div>
<div class="cell" style="left:765px;top:857px">0</div>
<div class="cell" style="left:1004px;top:857px">0</div>
<div class="cell" style="left:1173px;top:857px">daishu004</div>
<div class="cell" style="left:1648px;top:857px;letter-spacing:-0.2px">2024-01-18T00:01:18</div>
<div class="bg g" style="left:856px;top:856px;width:56px">真实店铺</div>
<div class="lk" style="left:936px;top:857px">点击查看</div>
<div class="bg r" style="left:1345px;top:856px;width:45px">不推荐</div>
<div class="bg g" style="left:1426px;top:856px;width:45px">未冻结</div>
<div class="bg g" style="left:1495px;top:856px;width:45px">未拉黑</div>
<div class="lk" style="left:1563px;top:857px">点击查看</div>
<div class="btn" style="left:1854px;top:856px;width:94px"></div>
<div class="a" style="left:1923px;top:856px;width:1px;height:30px;background:#ccc"></div>
<div class="a" style="left:1854px;top:863px;width:70px;text-align:center;font-size:14px;line-height:17px;color:#555">操作</div>
<div class="car" style="left:1932px;top:870px;border-top-color:#333"></div>
<div class="cell" style="left:232px;top:898px">4012744</div>
<div class="cell" style="left:301px;top:898px">vsfafaf73@gmail.com</div>
<div class="cell" style="left:474px;top:898px">romantic</div>
<div class="cell" style="left:572px;top:898px">C</div>
<div class="cell" style="left:640px;top:898px">0</div>
<div class="cell" style="left:765px;top:898px">0</div>
<div class="cell" style="left:1004px;top:898px">14851</div>
<div class="cell" style="left:1095px;top:898px">4622.07</div>
<div class="cell" style="left:1173px;top:898px">unrotope1980@yahoo.com</div>
<div class="cell" style="left:1648px;top:898px;letter-spacing:-0.2px">2024-01-16T19:07:38</div>
<div class="bg g" style="left:856px;top:897px;width:56px">真实店铺</div>
<div class="lk" style="left:936px;top:898px">点击查看</div>
<div class="bg g" style="left:1345px;top:897px;width:56px">店铺推荐</div>
<div class="bg g" style="left:1426px;top:897px;width:45px">未冻结</div>
<div class="bg g" style="left:1495px;top:897px;width:45px">未拉黑</div>
<div class="lk" style="left:1563px;top:898px">点击查看</div>
<div class="btn" style="left:1854px;top:897px;width:94px"></div>
<div class="a" style="left:1923px;top:897px;width:1px;height:30px;background:#ccc"></div>
<div class="a" style="left:1854px;top:904px;width:70px;text-align:center;font-size:14px;line-height:17px;color:#555">操作</div>
<div class="car" style="left:1932px;top:911px;border-top-color:#333"></div>
<div class="cell" style="left:232px;top:939px">4012743</div>
<div class="cell" style="left:301px;top:939px">168000001@gmail.com</div>
<div class="cell" style="left:474px;top:939px">Helena</div>
<div class="cell" style="left:572px;top:939px">0</div>
<div class="cell" style="left:640px;top:939px">0</div>
<div class="cell" style="left:765px;top:939px">0</div>
<div class="cell" style="left:1004px;top:939px">16679</div>
<div class="cell" style="left:1095px;top:939px">3189.69</div>
<div class="cell" style="left:1173px;top:939px">unrotope1980@yahoo.com</div>
<div class="cell" style="left:1648px;top:939px;letter-spacing:-0.2px">2024-01-16T19:07:34</div>
<div class="bg g" style="left:856px;top:938px;width:56px">真实店铺</div>
<div class="lk" style="left:936px;top:939px">点击查看</div>
<div class="bg g" style="left:1345px;top:938px;width:56px">店铺推荐</div>
<div class="bg g" style="left:1426px;top:938px;width:45px">未冻结</div>
<div class="bg g" style="left:1495px;top:938px;width:45px">未拉黑</div>
<div class="lk" style="left:1563px;top:939px">点击查看</div>
<div class="btn" style="left:1854px;top:938px;width:94px"></div>
<div class="a" style="left:1923px;top:938px;width:1px;height:30px;background:#ccc"></div>
<div class="a" style="left:1854px;top:945px;width:70px;text-align:center;font-size:14px;line-height:17px;color:#555">操作</div>
<div class="car" style="left:1932px;top:952px;border-top-color:#333"></div>
<div class="pg" style="left:221px;width:51px;color:#3d80b8">首页</div>
<div class="pg" style="left:276px;width:63px;color:#3d80b8">上一页</div>
<div class="pg" style="left:343px;width:35px;color:#a8434a">1</div>
<div class="pg" style="left:382px;width:62px;color:#3d80b8">下一页</div>
<div class="pg" style="left:449px;width:51px;color:#3d80b8">尾页</div>
</body></html>
